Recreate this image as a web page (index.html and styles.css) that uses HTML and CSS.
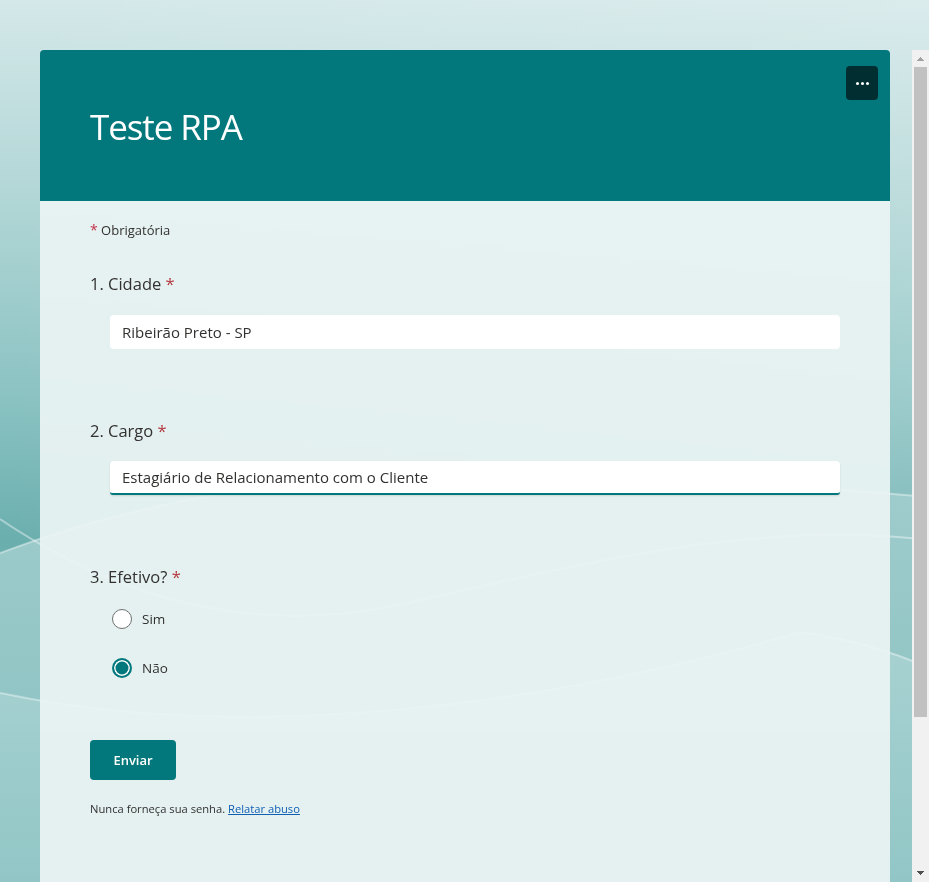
FILE: index.html
```html
<!DOCTYPE html>
<html lang="pt-BR">
<head>
<meta charset="utf-8">
<title>Teste RPA</title>
<link rel="stylesheet" href="styles.css">
</head>
<body>
<svg class="backdrop" viewBox="0 0 929 882" preserveAspectRatio="none" aria-hidden="true">
  <defs>
    <linearGradient id="sky" x1="0" y1="0" x2="0" y2="545" gradientUnits="userSpaceOnUse">
      <stop offset="0" stop-color="#d4e8e9"/>
      <stop offset="0.38" stop-color="#b0d5d5"/>
      <stop offset="0.72" stop-color="#8cc3c3"/>
      <stop offset="1" stop-color="#6aaeae"/>
    </linearGradient>
    <linearGradient id="sheen" x1="0" y1="0" x2="929" y2="0" gradientUnits="userSpaceOnUse">
      <stop offset="0" stop-color="#ffffff" stop-opacity="0"/>
      <stop offset="1" stop-color="#ffffff" stop-opacity="0.16"/>
    </linearGradient>
    <linearGradient id="band1" x1="0" y1="500" x2="0" y2="882" gradientUnits="userSpaceOnUse">
      <stop offset="0" stop-color="#9ecbcb"/>
      <stop offset="1" stop-color="#86bfbf"/>
    </linearGradient>
    <linearGradient id="band2" x1="0" y1="650" x2="0" y2="882" gradientUnits="userSpaceOnUse">
      <stop offset="0" stop-color="#a7d1d1"/>
      <stop offset="1" stop-color="#92c6c6"/>
    </linearGradient>
  </defs>
  <rect width="929" height="882" fill="url(#sky)"/>
  <rect width="929" height="882" fill="url(#sheen)"/>
  <path d="M0,553 C300,440 600,470 929,497 L929,882 L0,882 Z" fill="url(#band1)"/>
  <path d="M0,693 C250,745 550,705 800,632 C860,640 900,655 929,668 L929,882 L0,882 Z" fill="url(#band2)"/>
  <g fill="none" stroke="#ffffff" stroke-opacity="0.4" stroke-width="2">
    <path d="M0,553 C300,440 600,470 929,497"/>
    <path d="M0,519 C120,600 260,640 420,600 C600,560 760,520 929,540"/>
    <path d="M0,693 C250,745 550,705 800,632 C860,640 900,655 929,668"/>
  </g>
</svg>

<div class="page">
  <div class="viewport">
    <main class="scroller">
      <div class="card">
        <header class="card-header">
          <h1 class="form-title">Teste RPA</h1>
          <button class="more-btn" type="button" aria-label="Mais opções">
            <span class="dot"></span><span class="dot"></span><span class="dot"></span>
          </button>
        </header>

        <div class="card-body">
          <p class="required-note"><span class="star">*</span> Obrigatória</p>

          <section class="question">
            <div class="q-title">1. Cidade <span class="star">*</span></div>
            <div class="text-input">Ribeirão Preto - SP</div>
          </section>

          <section class="question">
            <div class="q-title">2. Cargo <span class="star">*</span></div>
            <div class="text-input is-active">Estagiário de Relacionamento com o Cliente</div>
          </section>

          <section class="question question-choice">
            <div class="q-title">3. Efetivo? <span class="star">*</span></div>
            <div class="choices">
              <div class="choice"><span class="radio"></span><span class="choice-label">Sim</span></div>
              <div class="choice"><span class="radio is-checked"></span><span class="choice-label">Não</span></div>
            </div>
          </section>

          <button class="submit-btn" type="button">Enviar</button>

          <p class="footer-note">Nunca forneça sua senha. <a class="abuse-link" href="#">Relatar abuso</a></p>
        </div>
      </div>
    </main>

    <div class="scrollbar" aria-hidden="true">
      <div class="sb-btn sb-up"></div>
      <div class="sb-track"><div class="sb-thumb"></div></div>
      <div class="sb-btn sb-down"></div>
    </div>
  </div>
</div>
</body>
</html>
```

FILE: styles.css
```css
html, body {
  margin: 0;
  padding: 0;
  height: 882px;
  overflow: hidden;
}

body {
  font-family: "Open Sans", "Noto Sans", "Liberation Sans", sans-serif;
  color: #323130;
  background: #c9e2e3;
}

.backdrop {
  position: fixed;
  inset: 0;
  width: 100%;
  height: 100%;
  z-index: 0;
  display: block;
}

.page {
  position: relative;
  z-index: 1;
  padding-top: 50px;
}

.viewport {
  display: flex;
  height: 832px;
}

.scroller {
  display: block;
  flex: 1;
  min-width: 0;
  overflow: hidden;
}

/* scrollbar */
.scrollbar {
  width: 17px;
  flex: none;
  background: #f1f1f1;
  display: flex;
  flex-direction: column;
}

.sb-btn {
  height: 17px;
  flex: none;
  background-repeat: no-repeat;
  background-size: 4px 4px, 4px 4px;
}

.sb-up {
  background-image:
    linear-gradient(to top left, #a3a3a3 50%, transparent 50%),
    linear-gradient(to top right, #a3a3a3 50%, transparent 50%);
  background-position: 4.5px 7px, 8.5px 7px;
}

.sb-down {
  background-image:
    linear-gradient(to bottom left, #505050 50%, transparent 50%),
    linear-gradient(to bottom right, #505050 50%, transparent 50%);
  background-position: 4.5px 6px, 8.5px 6px;
}

.sb-track {
  flex: 1;
  padding: 0 2px;
}

.sb-thumb {
  height: 650px;
  background: #c1c1c1;
}

/* card */
.card {
  width: 850px;
  margin: 0 0 20px 40px;
  border-radius: 4px 4px 0 0;
  overflow: hidden;
}

.card-header {
  height: 151px;
  box-sizing: border-box;
  background: #03787c;
  display: flex;
  align-items: center;
  justify-content: space-between;
  padding: 0 12px 0 50px;
}

.form-title {
  margin: 0;
  color: #ffffff;
  font-size: 35px;
  font-weight: 400;
  letter-spacing: -1.1px;
  line-height: 48px;
  position: relative;
  top: 1px;
}

.more-btn {
  align-self: flex-start;
  margin-top: 16px;
  width: 32px;
  height: 34px;
  border: 0;
  border-radius: 4px;
  background: #012e30;
  padding: 0;
  display: flex;
  align-items: center;
  justify-content: center;
  gap: 2px;
}

.dot {
  width: 3px;
  height: 3px;
  border-radius: 50%;
  background: #ffffff;
}

.card-body {
  min-height: 850px;
  box-sizing: border-box;
  background: rgba(234, 243, 243, 0.94);
  padding: 20px 50px 0 50px;
}

.required-note {
  margin: 0;
  font-size: 13px;
  line-height: 18px;
}

.star {
  color: #b4383e;
}

.required-note .star {
  color: #c4314b;
  font-size: 14px;
}

.question {
  margin-top: 33px;
}

.question + .question {
  margin-top: 70px;
}

.q-title {
  font-size: 16.5px;
  line-height: 24px;
}

.text-input {
  margin: 19px 0 0 20px;
  height: 34px;
  box-sizing: border-box;
  background: #ffffff;
  border-radius: 4px;
  padding: 0 12px;
  font-size: 15px;
  line-height: 34px;
  white-space: nowrap;
}

.text-input.is-active {
  margin-top: 18px;
  border-bottom: 2px solid #03787c;
  line-height: 32px;
  box-shadow: 0 1px 2px rgba(0, 0, 0, 0.12);
  border-radius: 4px 4px 3px 3px;
}

.choices {
  margin: 15px 0 0 22px;
  display: flex;
  flex-direction: column;
  gap: 19px;
}

.choice {
  height: 30px;
  display: flex;
  align-items: center;
  gap: 10px;
}

.radio {
  width: 20px;
  height: 20px;
  box-sizing: border-box;
  border-radius: 50%;
  border: 1px solid #6f6f6f;
  background: #ffffff;
}

.radio.is-checked {
  border: 2px solid #03787c;
  background: #03787c;
  box-shadow: inset 0 0 0 1.5px #ffffff;
}

.choice-label {
  font-size: 13.5px;
}

.submit-btn {
  display: block;
  margin-top: 57px;
  width: 86px;
  height: 40px;
  border: 0;
  border-radius: 4px;
  background: #03787c;
  color: #ffffff;
  font-family: inherit;
  font-size: 13px;
  font-weight: 600;
  padding: 0;
}

.footer-note {
  margin: 21px 0 0 0;
  font-size: 11.2px;
  line-height: 16px;
}

.abuse-link {
  color: #0f5fb3;
  text-decoration: underline;
}
```
